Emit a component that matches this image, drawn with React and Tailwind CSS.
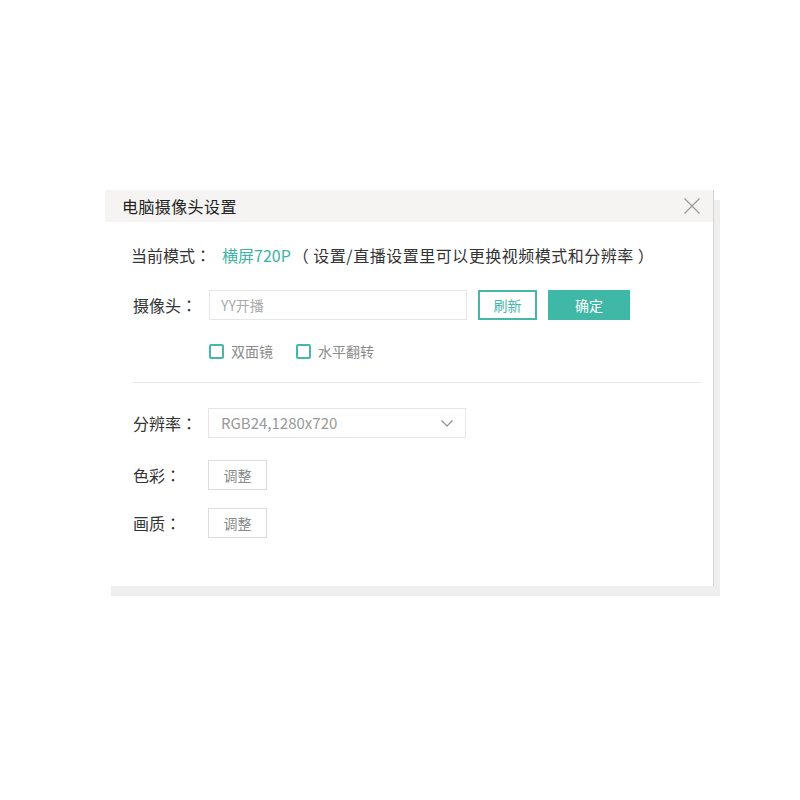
import { useState } from "react";

const FONT = { fontFamily: '"Microsoft YaHei", "Noto Sans CJK SC", "Noto Sans", sans-serif' };
const COLON = { fontFamily: '"Noto Sans CJK TC", "Noto Sans CJK SC", sans-serif' };

function Label({ text, w = "w-[76px]" }) {
  return (
    <span className={`${w} pl-[2px] text-[16px] text-[#333] shrink-0`}>
      {text}
      <span style={COLON}>：</span>
    </span>
  );
}

function Check({ label }) {
  const [on, setOn] = useState(false);
  return (
    <label className="flex items-center cursor-pointer" onClick={() => setOn(!on)}>
      <span className="w-[15px] h-[15px] border-2 border-[#46b8a9] rounded-[2px] bg-white flex items-center justify-center">
        {on && <span className="w-[7px] h-[7px] bg-[#46b8a9]" />}
      </span>
      <span className="ml-[7px] text-[14px] leading-[20px] text-[#8a8a8a]">{label}</span>
    </label>
  );
}

export default function App() {
  return (
    <div className="min-h-screen w-[800px] h-[800px] bg-white pt-[190px] pl-[105px]" style={FONT}>
      {/* Dialog */}
      <div className="w-[609px] h-[396px] bg-white border-r border-[#d6d4cf] shadow-[6px_10px_0_0_#eeeeee] flex flex-col">
        {/* Title bar */}
        <div className="h-[32px] bg-[#f5f4f2] flex items-center justify-between pl-[17px] pr-[12px]">
          <span className="text-[16px] tracking-[0.4px] text-[#222]">电脑摄像头设置</span>
          <svg width="18" height="18" viewBox="0 0 18 18" className="text-[#9a9a9a]">
            <path d="M1.5 1.5 L16.5 16.5 M16.5 1.5 L1.5 16.5" stroke="currentColor" strokeWidth="1.2" fill="none" />
          </svg>
        </div>

        <div className="pl-[26px] pr-[12px]">
          {/* Current mode */}
          <div className="mt-[23px] flex items-center h-[20px] text-[16px]">
            <span className="text-[#333] w-[91px] shrink-0">
              当前模式<span style={COLON}>：</span>
            </span>
            <span className="text-[#3fb3a3]">横屏720P</span>
            <span className="text-[#333] ml-[2px] tracking-[0.5px] whitespace-nowrap">（ 设置/直播设置里可以更换视频模式和分辨率 ）</span>
          </div>

          {/* Camera */}
          <div className="mt-[25px] flex items-center">
            <Label text="摄像头" w="w-[78px]" />
            <div className="w-[258px] h-[30px] border border-[#e6e6e6] flex items-center pl-[11px] text-[14px] text-[#aaa]">
              YY开播
            </div>
            <button className="ml-[11px] w-[59px] h-[30px] border-2 border-[#46b8a9] text-[#46b8a9] text-[14px] bg-white">
              刷新
            </button>
            <button className="ml-[11px] w-[82px] h-[30px] bg-[#3fb8a7] text-white text-[14px]">确定</button>
          </div>

          {/* Options */}
          <div className="mt-[21px] flex items-center pl-[78px] gap-[23px]">
            <Check label="双面镜" />
            <Check label="水平翻转" />
          </div>

          <div className="mt-[21px] ml-[2px] h-px bg-[#e8e8e8] w-[569px]" />

          {/* Resolution */}
          <div className="mt-[25px] flex items-center">
            <Label text="分辨率" w="w-[77px]" />
            <div className="w-[258px] h-[30px] border border-[#e6e6e6] flex items-center justify-between pl-[12px] pr-[12px] text-[15px] text-[#999]">
              <span>RGB24,1280x720</span>
              <svg width="12" height="7" viewBox="0 0 12 7">
                <path d="M0.5 0.5 L6 6 L11.5 0.5" stroke="#8a8a8a" strokeWidth="1.1" fill="none" />
              </svg>
            </div>
          </div>

          {/* Color */}
          <div className="mt-[22px] flex items-center">
            <Label text="色彩" w="w-[77px]" />
            <button className="w-[59px] h-[30px] border border-[#dcdcdc] text-[14px] text-[#8a8a8a] bg-white">调整</button>
          </div>

          {/* Quality */}
          <div className="mt-[18px] flex items-center">
            <Label text="画质" w="w-[77px]" />
            <button className="w-[59px] h-[30px] border border-[#dcdcdc] text-[14px] text-[#8a8a8a] bg-white">调整</button>
          </div>
        </div>
      </div>
    </div>
  );
}
